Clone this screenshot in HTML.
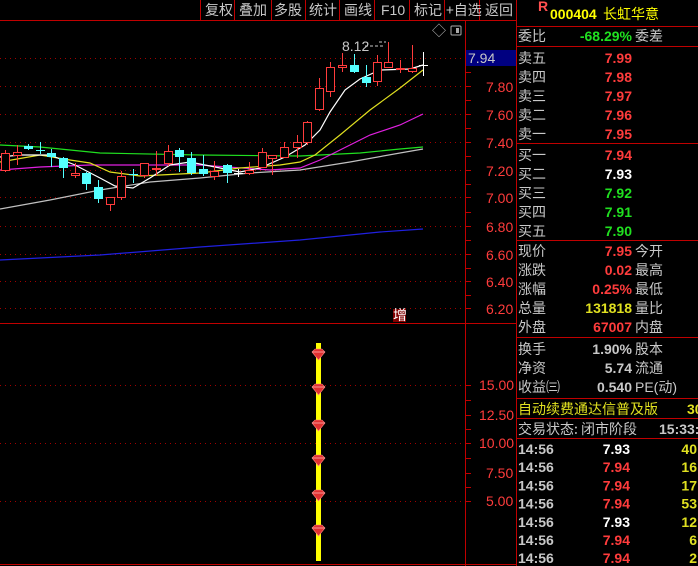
<!DOCTYPE html>
<html><head><meta charset="utf-8"><style>
html,body{margin:0;padding:0;background:#000;width:698px;height:566px;overflow:hidden}
svg{display:block}
text{font-family:"Liberation Sans","Noto Sans CJK SC",sans-serif;font-size:14px}
.cj{font-family:"Noto Sans CJK SC","WenQuanYi Zen Hei",sans-serif}
</style></head><body>
<svg id="s" width="698" height="566" xmlns="http://www.w3.org/2000/svg">
<rect width="698" height="566" fill="#000"/>
<!-- toolbar -->
<g stroke="#c00000" stroke-width="1">
<line x1="0" y1="20.5" x2="516" y2="20.5"/>
<line x1="200.5" y1="0" x2="200.5" y2="20"/><line x1="234.5" y1="0" x2="234.5" y2="20"/>
<line x1="271.5" y1="0" x2="271.5" y2="20"/><line x1="305.5" y1="0" x2="305.5" y2="20"/>
<line x1="339.5" y1="0" x2="339.5" y2="20"/><line x1="374.5" y1="0" x2="374.5" y2="20"/>
<line x1="409.5" y1="0" x2="409.5" y2="20"/><line x1="444.5" y1="0" x2="444.5" y2="20"/>
<line x1="479.5" y1="0" x2="479.5" y2="20"/>
<line x1="465.5" y1="21" x2="465.5" y2="566"/>
<line x1="516.5" y1="0" x2="516.5" y2="566"/>
<line x1="0" y1="323.5" x2="516" y2="323.5"/>
<line x1="0" y1="564.5" x2="516" y2="564.5"/>
</g>
<g fill="#c8c8c8" class="cj" font-size="13">
<text x="205" y="15" class="cj" font-size="13">复权</text><text x="239" y="15" class="cj" font-size="13">叠加</text>
<text x="274" y="15" class="cj" font-size="13">多股</text><text x="309" y="15" class="cj" font-size="13">统计</text>
<text x="344" y="15" class="cj" font-size="13">画线</text><text x="381" y="15" font-size="13">F10</text>
<text x="414" y="15" class="cj" font-size="13">标记</text><text x="446" y="15" class="cj" font-size="13">+自选</text>
<text x="485" y="15" class="cj" font-size="13">返回</text>
</g>
<!-- grid -->
<g stroke="#a00000" stroke-dasharray="1,4">
<line x1="0" y1="58.5" x2="465" y2="58.5"/><line x1="0" y1="86.5" x2="465" y2="86.5"/>
<line x1="0" y1="114.5" x2="465" y2="114.5"/><line x1="0" y1="142.5" x2="465" y2="142.5"/>
<line x1="0" y1="170.5" x2="465" y2="170.5"/><line x1="0" y1="197.5" x2="465" y2="197.5"/>
<line x1="0" y1="226.5" x2="465" y2="226.5"/><line x1="0" y1="254.5" x2="465" y2="254.5"/>
<line x1="0" y1="281.5" x2="465" y2="281.5"/><line x1="0" y1="308.5" x2="465" y2="308.5"/>
<line x1="0" y1="385.5" x2="465" y2="385.5"/><line x1="0" y1="443.5" x2="465" y2="443.5"/>
<line x1="0" y1="501.5" x2="465" y2="501.5"/>
</g>
<!-- axis labels -->
<g fill="#ff3c3c" font-size="13">
<text x="486" y="92">7.80</text><text x="486" y="120">7.60</text><text x="486" y="148">7.40</text>
<text x="486" y="176">7.20</text><text x="486" y="203">7.00</text><text x="486" y="232">6.80</text>
<text x="486" y="260">6.60</text><text x="486" y="287">6.40</text><text x="486" y="314">6.20</text>
<text x="479" y="390">15.00</text><text x="479" y="420">12.50</text><text x="479" y="448">10.00</text>
<text x="486" y="478">7.50</text><text x="486" y="506">5.00</text>
</g>
<g id="ticks" stroke="#c00000"></g>
<rect x="466" y="50" width="50" height="16" fill="#000080"/>
<text x="468" y="63" fill="#c8c8c8" font-size="13">7.94</text>
<text x="432" y="36" fill="#aaa" font-size="11">◇</text>
<rect x="451" y="26" width="10" height="9" fill="none" stroke="#aaa" rx="1"/><rect x="456" y="28" width="3" height="5" fill="#aaa"/>
<text x="342" y="51" fill="#c8c8c8" font-size="13">8.12</text>
<path d="M365 46 H384 M379 42 L386 42" stroke="#c8c8c8" stroke-dasharray="3,2" fill="none"/>
<!-- MAs -->
<g fill="none" stroke-width="1.2">
<polyline stroke="#2020e0" points="0,260 100,255 200,247 300,240 380,232 423,229"/>
<polyline stroke="#c0c0c0" points="0,209 50,200 100,190 150,182 200,178 250,173 300,170 350,162 400,153 423,149"/>
<polyline stroke="#20e020" points="0,145 40,147 100,153 200,155 300,156 360,153 400,149 423,147"/>
<polyline stroke="#e020e0" points="0,170 40,167 90,165 200,165 270,170 300,168 320,160 340,150 370,135 400,125 423,114"/>
<polyline stroke="#e0e020" points="0,162 40,155 70,160 90,163 110,172 140,176 200,173 240,168 280,165 300,162 315,155 340,135 370,110 400,88 423,70"/>
<polyline stroke="#ffffff" points="0,157 20,155 50,155 75,165 100,178 115,186 133,188 150,178 170,165 190,162 210,166 240,172 260,168 285,157 305,145 320,130 330,112 345,90 360,79 380,70 410,69 423,65"/>
</g>
<g id="cd"></g>
<rect x="393" y="309" width="13" height="13" fill="#800000"/>
<text x="393" y="320" fill="#fff" font-size="12" class="cj">增</text>
<rect x="316" y="343" width="5" height="218" fill="#ffff00"/>
<g id="dm"></g>
<!-- right panel -->
<g stroke="#c00000">
<line x1="517" y1="26.5" x2="698" y2="26.5"/><line x1="517" y1="46.5" x2="698" y2="46.5"/>
<line x1="517" y1="143.5" x2="698" y2="143.5"/><line x1="517" y1="240.5" x2="698" y2="240.5"/>
<line x1="517" y1="337.5" x2="698" y2="337.5"/><line x1="517" y1="398.5" x2="698" y2="398.5"/>
<line x1="517" y1="418.5" x2="698" y2="418.5"/><line x1="517" y1="438.5" x2="698" y2="438.5"/>
</g>
<text x="538" y="11" fill="#ff5050" font-size="9" font-weight="bold">R</text>
<text x="550" y="19" fill="#ffff00" font-size="14" font-weight="bold">000404</text>
<text x="603" y="19" fill="#ffff00" class="cj" font-size="15">长虹华意</text>
<g id="rp"></g>
</svg>
<script>
var ns="http://www.w3.org/2000/svg";
function el(p,t,a,tx){var e=document.createElementNS(ns,t);for(var k in a)e.setAttribute(k,a[k]);if(tx!=null)e.textContent=tx;document.getElementById(p).appendChild(e);return e;}
// ticks
[58,72,86,100,114,128,142,156,170,184,197,212,226,240,254,268,281,295,308,385,400,415,429,443,458,473,487,501].forEach(function(y){el("ticks","line",{x1:466,x2:471,y1:y+.5,y2:y+.5});});
// candles: x, color(r/c/w), bodyTop, bodyBot, hi, lo
var C=[[5,'r',153,170,150,172],[17,'r',152,155,145,165],[28,'c',146,149,144,150],[40,'c',150,150,142,154],[51,'c',153,157,149,167],[63,'c',158,168,157,178],[75,'r',173,175,163,178],[86,'c',173,184,172,190],[98,'c',187,199,180,203],[110,'r',197,204,197,211],[121,'r',176,197,171,200],[133,'c',174,174,169,183],[144,'r',163,175,163,178],[156,'r',168,169,151,176],[168,'r',151,163,145,166],[179,'c',150,157,148,172],[191,'c',158,173,152,175],[203,'c',169,174,155,176],[214,'r',171,176,161,180],[227,'c',165,173,164,183],[238,'w',173,173,169,177],[249,'r',170,173,162,175],[262,'r',152,167,148,168],[272,'r',155,158,155,175],[284,'r',147,157,142,158],[297,'r',142,147,135,158],[307,'r',122,142,121,145],[319,'r',88,109,78,111],[330,'r',67,91,62,97],[342,'r',65,67,53,72],[354,'c',65,72,54,73],[366,'c',77,83,65,87],[377,'r',62,81,55,86],[388,'r',62,67,42,67],[400,'r',68,69,60,73],[412,'r',68,71,45,73],[423,'w',65,65,52,76]];
C.forEach(function(c){var x=c[0],col=c[1]=='r'?'#ff3c3c':c[1]=='c'?'#54ffff':'#ffffff';
el("cd","line",{x1:x+.5,x2:x+.5,y1:c[4],y2:c[5],stroke:col});
var h=c[3]-c[2];
if(h<1){el("cd","line",{x1:x-4,x2:x+5,y1:c[2]+.5,y2:c[2]+.5,stroke:col});}
else if(c[1]=='r'){el("cd","rect",{x:x-3.5,y:c[2]+.5,width:8,height:h,fill:"#000",stroke:col});}
else el("cd","rect",{x:x-4,y:c[2],width:9,height:h,fill:col});});
// diamonds
[355,390,426,461,496,531].forEach(function(y){
el("dm","polygon",{points:(312)+","+(y-3)+" "+(315)+","+(y-6)+" "+(322)+","+(y-6)+" "+(325)+","+(y-3)+" "+(318.5)+","+(y+5),fill:"#e03030",stroke:"#ff8080","stroke-width":"0.6"});
el("dm","line",{x1:312,x2:325,y1:y-3,y2:y-3,stroke:"#ffb0b0","stroke-width":"0.8"});});
// right panel
function row(y,l,v,vc,r){el("rp","text",{x:518,y:y,fill:"#c8c8c8","font-size":15,"class":"cj"},l);
if(v)el("rp","text",{x:632,y:y,fill:vc,"font-size":13,"font-weight":"bold","text-anchor":"end"},v);
if(r)el("rp","text",{x:635,y:y,fill:"#c8c8c8","font-size":15,"class":"cj"},r);}
row(41,"委比","-68.29%","#20e020","委差");
row(63,"卖五","7.99","#ff3c3c");row(82,"卖四","7.98","#ff3c3c");row(101,"卖三","7.97","#ff3c3c");row(120,"卖二","7.96","#ff3c3c");row(139,"卖一","7.95","#ff3c3c");
row(160,"买一","7.94","#ff3c3c");row(179,"买二","7.93","#ffffff");row(198,"买三","7.92","#20e020");row(217,"买四","7.91","#20e020");row(236,"买五","7.90","#20e020");
row(256,"现价","7.95","#ff3c3c","今开");row(275,"涨跌","0.02","#ff3c3c","最高");row(294,"涨幅","0.25%","#ff3c3c","最低");
row(313,"总量","131818","#e0e020","量比");row(332,"外盘","67007","#ff3c3c","内盘");
row(354,"换手","1.90%","#c8c8c8","股本");row(373,"净资","5.74","#c8c8c8","流通");row(392,"收益㈢","0.540","#c8c8c8");
el("rp","text",{x:635,y:392,fill:"#c8c8c8","font-size":14},"PE(动)");
el("rp","text",{x:518,y:414,fill:"#e0e020","font-size":15,"class":"cj"},"自动续费通达信普及版");
el("rp","text",{x:687,y:414,fill:"#e0e020","font-size":13,"font-weight":"bold"},"30");
el("rp","text",{x:518,y:434,fill:"#c8c8c8","font-size":15,"class":"cj"},"交易状态: 闭市阶段");
el("rp","text",{x:659,y:434,fill:"#c8c8c8","font-size":13,"font-weight":"bold"},"15:33:");
[["7.93","#fff","40"],["7.94","#ff3c3c","16"],["7.94","#ff3c3c","17"],["7.94","#ff3c3c","53"],["7.93","#fff","12"],["7.94","#ff3c3c","6"],["7.94","#ff3c3c","2"]].forEach(function(t,i){var y=454+i*18.2;
el("rp","text",{x:518,y:y,fill:"#c8c8c8","font-size":13,"font-weight":"bold"},"14:56");
el("rp","text",{x:630,y:y,fill:t[1],"font-size":13,"font-weight":"bold","text-anchor":"end"},t[0]);
el("rp","text",{x:697,y:y,fill:"#e0e020","font-size":13,"font-weight":"bold","text-anchor":"end"},t[2]);});
</script>
</body></html>
